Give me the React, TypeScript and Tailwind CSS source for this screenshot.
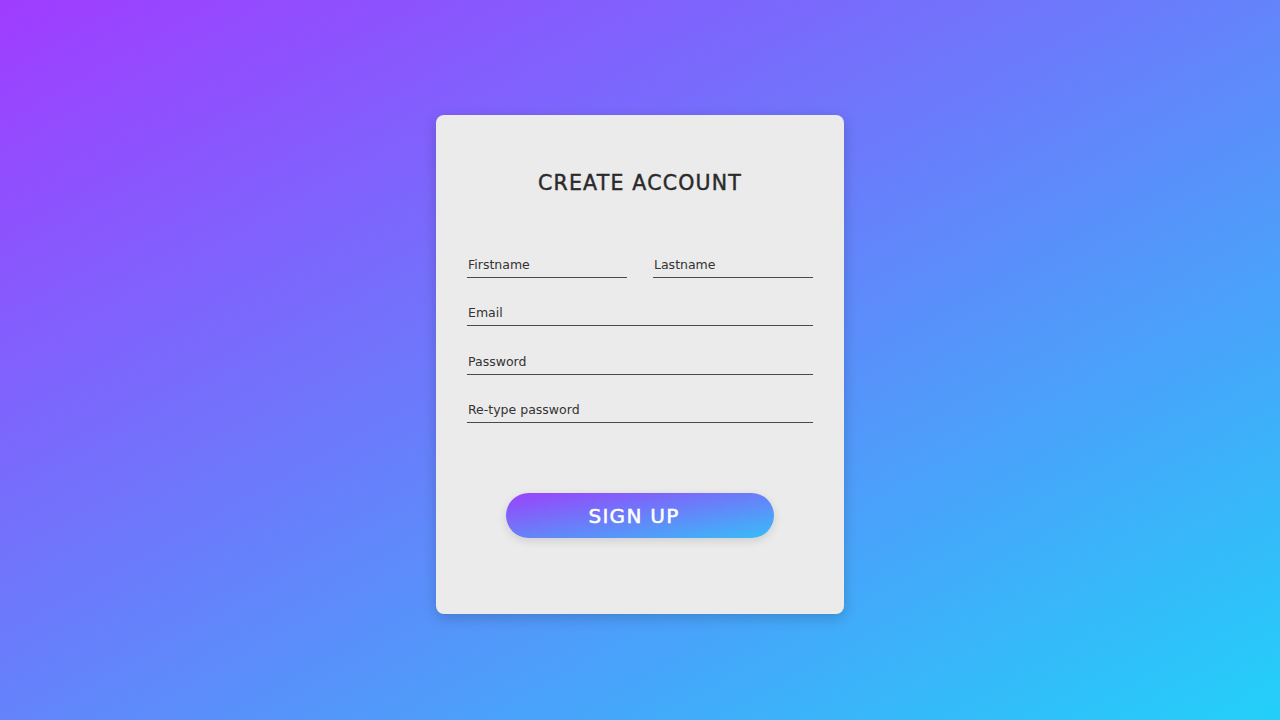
import React from "react";

const font = { fontFamily: '"DejaVu Sans", "Noto Sans", sans-serif' };

function Field({ label, className = "" }: { label: string; className?: string }) {
  return (
    <input
      type="text"
      placeholder={label}
      className={`h-[30px] w-full border-b-[1.5px] border-[#4a4a4a] bg-transparent px-[1px] pt-[4px] text-[12.5px] text-[#2b2b2b] outline-none placeholder:text-[#333] ${className}`}
    />
  );
}

export default function App() {
  return (
    <div
      className="flex min-h-[720px] w-full justify-center bg-[linear-gradient(to_bottom_right,#a03cff_0%,#6a7cfb_45%,#22d0f9_100%)] pt-[115px]"
      style={font}
    >
      <div className="flex h-[499px] w-[408px] flex-col rounded-[8px] bg-[#ebebeb] px-[31px] shadow-[0_4px_14px_rgba(0,0,0,0.18)]">
        <h1 className="pt-[53px] text-center text-[20.5px] font-normal tracking-[1.2px] text-[#2a2a2a] [-webkit-text-stroke:0.45px_#2a2a2a]">
          CREATE ACCOUNT
        </h1>

        {/* form fields */}
        <div className="mt-[49px] flex flex-col gap-[18.5px]">
          <div className="grid grid-cols-2 gap-[26px]">
            <Field label="Firstname" />
            <Field label="Lastname" />
          </div>
          <Field label="Email" />
          <Field label="Password" />
          <Field label="Re-type password" />
        </div>

        <div className="mt-[70px] flex justify-center">
          <button className="h-[45px] w-[268px] rounded-full bg-[linear-gradient(to_bottom_right,#9a42fb,#37bdf8)] pr-[12px] text-[20px] font-normal tracking-[1.3px] text-white shadow-[0_3px_10px_rgba(0,0,0,0.12)] [-webkit-text-stroke:0.5px_#ffffff]">
            SIGN UP
          </button>
        </div>
      </div>
    </div>
  );
}
